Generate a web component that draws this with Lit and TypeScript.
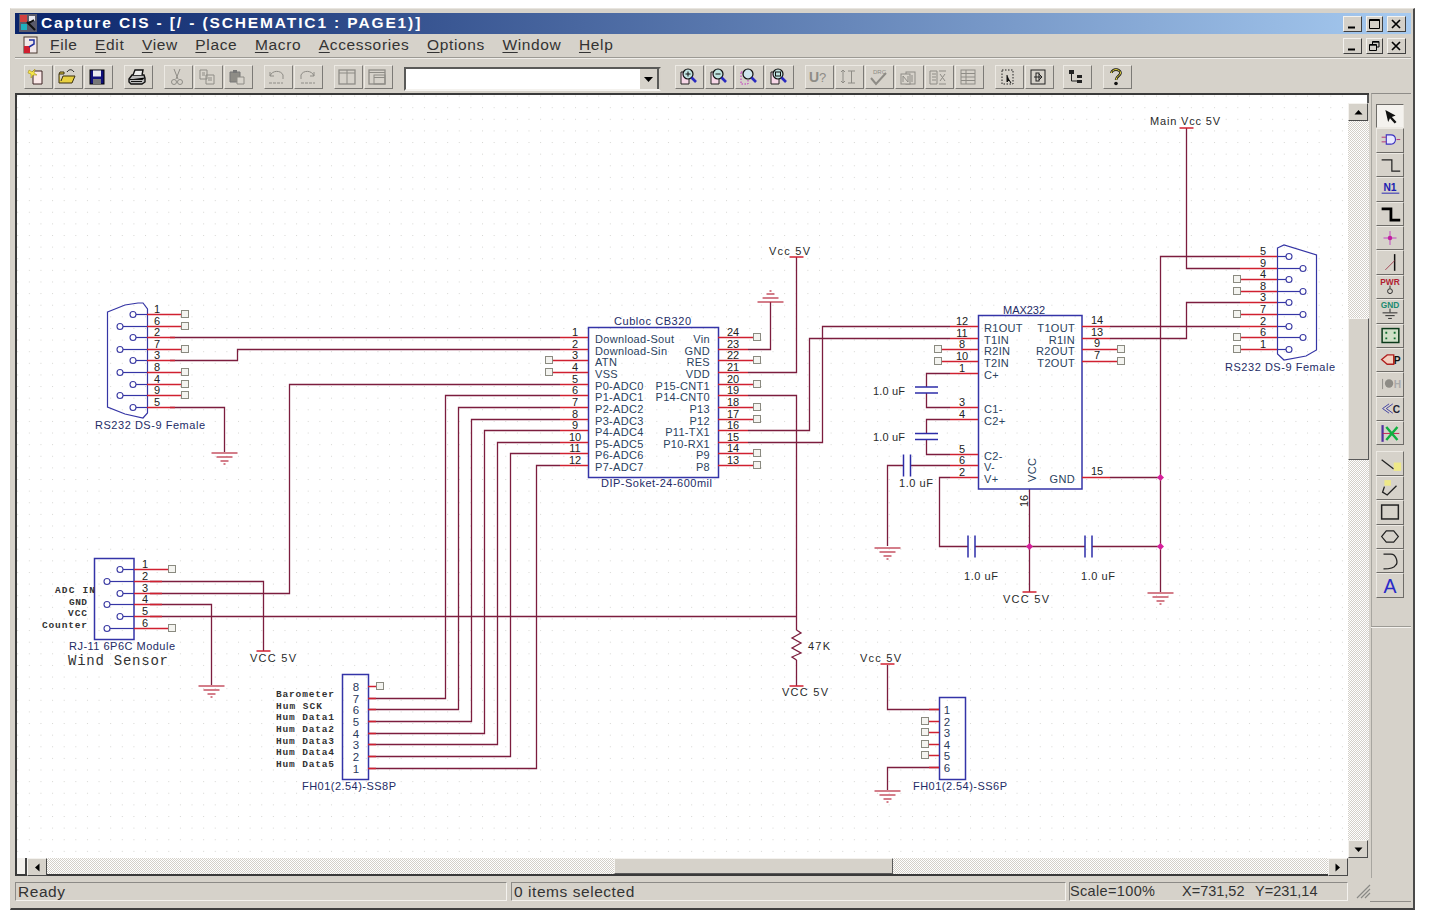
import { LitElement, html, css, svg } from "lit";
import { customElement } from "lit/decorators.js";

type P = [number, number];
const WIRES: P[][] = [
  [[170,337.5],[560,337.5]],
  [[170,360.5],[237.5,360.5],[237.5,349.5],[560,349.5]],
  [[170,407.5],[224.5,407.5],[224.5,452]],
  [[560,384.5],[289.5,384.5],[289.5,593.5],[150,593.5]],
  [[560,395.5],[445.5,395.5],[445.5,698.5],[368,698.5]],
  [[560,407.5],[458.5,407.5],[458.5,709.5],[368,709.5]],
  [[560,419.5],[471.5,419.5],[471.5,721.5],[368,721.5]],
  [[560,430.5],[484.5,430.5],[484.5,733.5],[368,733.5]],
  [[560,442.5],[497.5,442.5],[497.5,744.5],[368,744.5]],
  [[560,453.5],[510.5,453.5],[510.5,756.5],[368,756.5]],
  [[560,465.5],[536.5,465.5],[536.5,768.5],[368,768.5]],
  [[150,581.5],[263.5,581.5],[263.5,651]],
  [[150,604.5],[211.5,604.5],[211.5,685]],
  [[150,616.5],[796.5,616.5]],
  [[748,349.5],[770.5,349.5],[770.5,302]],
  [[748,372.5],[796.5,372.5],[796.5,257]],
  [[748,395.5],[796.5,395.5],[796.5,630]],
  [[796.5,660],[796.5,686]],
  [[748,430.5],[809.5,430.5],[809.5,338.5],[950,338.5]],
  [[748,442.5],[822.5,442.5],[822.5,326.5],[950,326.5]],
  [[1110,326.5],[1240,326.5]],
  [[1110,338.5],[1186.5,338.5],[1186.5,302.5],[1240,302.5]],
  [[1186.5,128],[1186.5,268.5],[1240,268.5]],
  [[1240,256.5],[1160.5,256.5],[1160.5,592]],
  [[1110,477.5],[1160.5,477.5]],
  [[950,373.5],[926.5,373.5],[926.5,387]],
  [[926.5,393],[926.5,407.5],[950,407.5]],
  [[950,419.5],[926.5,419.5],[926.5,433]],
  [[926.5,440],[926.5,454.5],[950,454.5]],
  [[950,465.5],[910,465.5]],
  [[904,465.5],[887.5,465.5],[887.5,546]],
  [[950,477.5],[939.5,477.5],[939.5,546.5],[968,546.5]],
  [[975,546.5],[1085,546.5]],
  [[1092,546.5],[1160.5,546.5]],
  [[1029.5,489],[1029.5,592]],
  [[887.5,665],[887.5,709.5],[939,709.5]],
  [[939,767.5],[887.5,767.5],[887.5,790]],
];

const pinL: [string, number][] = [["1",337.5],["2",349.5],["3",360.5],["4",372.5],["5",384.5],["6",395.5],["7",407.5],["8",419.5],["9",430.5],["10",442.5],["11",453.5],["12",465.5]];
const pinR: [string, number][] = [["24",337.5],["23",349.5],["22",360.5],["21",372.5],["20",384.5],["19",395.5],["18",407.5],["17",419.5],["16",430.5],["15",442.5],["14",453.5],["13",465.5]];
const cublocLeft = ["Download-Sout","Download-Sin","ATN","VSS","P0-ADC0","P1-ADC1","P2-ADC2","P3-ADC3","P4-ADC4","P5-ADC5","P6-ADC6","P7-ADC7"];
const cublocRight = ["Vin","GND","RES","VDD","P15-CNT1","P14-CNT0","P13","P12","P11-TX1","P10-RX1","P9","P8"];
const cublocNc = ["24","22","20","18","17","14","13"];

const maxL: [string, number, string][] = [["12",326.5,"R1OUT"],["11",338.5,"T1IN"],["8",349.5,"R2IN"],["10",361.5,"T2IN"],["1",373.5,"C+"],["3",407.5,"C1-"],["4",419.5,"C2+"],["5",454.5,"C2-"],["6",465.5,"V-"],["2",477.5,"V+"]];
const maxR: [string, number, string][] = [["14",326.5,"T1OUT"],["13",338.5,"R1IN"],["9",349.5,"R2OUT"],["7",361.5,"T2OUT"],["15",477.5,"GND"]];

const squares: P[] = [
  [757,337],[757,360],[757,384],[757,407],[757,419],[757,453],[757,465],
  [549,360],[549,372],
  [938,349],[938,361],[1121,349],[1121,361],
  [185,314],[185,326],[185,349],[185,372],[185,384],[185,395],
  [172,569],[172,628],
  [380,686],
  [1237,279],[1237,291],[1237,314],[1237,337],[1237,349],
  [925,721],[925,732],[925,744],[925,755],
];

const grounds: P[] = [[224.5,453],[211.5,686],[887.5,548],[1160.5,593],[887.5,791]];
const bars: P[] = [[1186.5,128],[796.5,257],[263.5,651],[796.5,686],[887.5,664],[1029.5,592]];
const caps: [number, number, boolean][] = [[926.5,390,true],[926.5,436.5,true],[907,465.5,false],[971.5,546.5,false],[1088.5,546.5,false]];
const dots: P[] = [[1160.5,477.5],[1029.5,546.5],[1160.5,546.5]];

// [x, centre-y, text, width, class]
const LABELS: [number, number, string, number, string][] = [
  [1150,120.5,"Main Vcc 5V",70,"lb"],
  [769,251,"Vcc 5V",41,"lb"],
  [614,321,"Cubloc CB320",77,"rf"],
  [601,483,"DIP-Soket-24-600mil",111,"rf"],
  [1003,309.5,"MAX232",42,"rf"],
  [95,425,"RS232 DS-9 Female",110,"rf"],
  [1225,367,"RS232 DS-9 Female",110,"rf"],
  [69,646,"RJ-11 6P6C Module",106,"rf"],
  [302,785.5,"FH01(2.54)-SS8P",94,"rf"],
  [913,785.5,"FH01(2.54)-SS6P",94,"rf"],
  [873,390.5,"1.0 uF",32,"lb"],
  [873,436.5,"1.0 uF",32,"lb"],
  [899,483,"1.0 uF",34,"lb"],
  [964,576,"1.0 uF",34,"lb"],
  [1081,576,"1.0 uF",34,"lb"],
  [1003,598.5,"VCC 5V",46,"lb"],
  [250,657.5,"VCC 5V",46,"lb"],
  [782,692,"VCC 5V",46,"lb"],
  [860,657.5,"Vcc 5V",41,"lb"],
  [808,646,"47K",22,"lb"],
  [55,588.5,"ADC IN",40,"mono"],
  [69,600.5,"GND",18,"mono"],
  [68,612,"VCC",19,"mono"],
  [42,623.5,"Counter",45,"mono"],
  [276,693,"Barometer",58,"mono"],
  [276,705,"Hum SCK",46,"mono"],
  [276,716,"Hum Data1",58,"mono"],
  [276,728,"Hum Data2",58,"mono"],
  [276,740,"Hum Data3",58,"mono"],
  [276,751,"Hum Data4",58,"mono"],
  [276,763,"Hum Data5",58,"mono"],
  [68,660.5,"Wind Sensor",100,"big"],
];

const label = (x: number, cy: number, s: string, w: number, c: string) =>
  svg`<text x=${x} y=${cy + 4} class=${c} textLength=${w} lengthAdjust="spacing">${s}</text>`;
const num = (x: number, y: number, s: string) => svg`<text x=${x} y=${y} class="num" text-anchor="middle">${s}</text>`;
const pinLine = (x1: number, x2: number, y: number) => svg`<line class="pin" x1=${x1} x2=${x2} y1=${y} y2=${y}></line>`;

function connector(rows: [string, number, number][], numX: number, boxX: number, odd: number, even: number) {
  return rows.map(([n, y, end], i) => {
    const cx = i % 2 === 0 ? odd : even;
    return svg`
      <line class="sym" x1=${cx} x2=${boxX} y1=${y} y2=${y}></line>
      <line class="pin" x1=${boxX} x2=${end} y1=${y} y2=${y}></line>
      <circle class="hole" cx=${cx} cy=${y} r="3"></circle>
      ${num(numX, y - 2, n)}`;
  });
}

const schematic = () => svg`
  <defs>
    <pattern id="grid" x="5.6" y="2.6" width="11.62" height="11.62" patternUnits="userSpaceOnUse">
      <rect width="1" height="1" fill="#d6d6d2"></rect>
    </pattern>
  </defs>
  <rect x="17" y="95" width="1331" height="763" fill="#fff"></rect>
  <rect x="17" y="95" width="1331" height="763" fill="url(#grid)"></rect>

  ${WIRES.map(p => svg`<polyline class="wire" points=${p.map(a => a.join(",")).join(" ")}></polyline>`)}

  <!-- Cubloc -->
  <rect class="box" x="588.5" y="327.5" width="130" height="150"></rect>
  ${pinL.map(([n, y], i) => svg`${pinLine(588, i === 2 || i === 3 ? 553 : 560, y)}${num(575, y - 2, n)}
    <text class="pn" x="595" y=${y + 5.5}>${cublocLeft[i]}</text>`)}
  ${pinR.map(([n, y], i) => svg`${pinLine(718, cublocNc.includes(n) ? 753 : 748, y)}${num(733, y - 2, n)}
    <text class="pn" x="710" y=${y + 5.5} text-anchor="end">${cublocRight[i]}</text>`)}

  <!-- MAX232 -->
  <rect class="box" x="978.5" y="315.5" width="103.5" height="173.5"></rect>
  ${maxL.map(([n, y, s]) => svg`${pinLine(978, n === "8" || n === "10" ? 942 : 950, y)}${num(962, y - 2, n)}
    <text class="pn" x="984" y=${y + 5}>${s}</text>`)}
  ${maxR.map(([n, y, s]) => svg`${pinLine(1082, n === "9" || n === "7" ? 1117 : 1110, y)}${num(1097, y - 3, n)}
    <text class="pn" x="1075" y=${y + 5} text-anchor="end">${s}</text>`)}
  <text class="pn" transform="translate(1036,482) rotate(-90)">VCC</text>
  <text class="num" transform="translate(1028,507) rotate(-90)">16</text>

  <!-- caps -->
  ${caps.map(([x, y, h]) => h
    ? svg`<line class="sym2" x1=${x - 11.5} x2=${x + 11.5} y1=${y - 3} y2=${y - 3}></line><line class="sym2" x1=${x - 11.5} x2=${x + 11.5} y1=${y + 3} y2=${y + 3}></line>`
    : svg`<line class="sym2" x1=${x - 3.5} x2=${x - 3.5} y1=${y - 11} y2=${y + 11}></line><line class="sym2" x1=${x + 3.5} x2=${x + 3.5} y1=${y - 11} y2=${y + 11}></line>`)}

  <!-- resistor -->
  <polyline class="wire" points="796.5,630 801,633 792,638 801,643 792,648 801,653 792,657 796.5,660"></polyline>

  <!-- left DB9 -->
  <path class="sym" d="M107.5,312 L125,305 L138,303 L143,303 L147.5,309 V413 L143,418 L125,414 L107.5,407 Z"></path>
  ${connector([["1",314.5,181],["6",326.5,181],["2",337.5,175],["7",349.5,181],["3",360.5,175],["8",372.5,181],["4",384.5,181],["9",395.5,181],["5",407.5,175]], 157, 147, 133, 120)}

  <!-- right DB9 -->
  <path class="sym" d="M1277.5,248 L1284,245 L1316.5,255 V350 L1306,356 L1284,360 L1277.5,354 Z"></path>
  ${connector([["5",256.5,1240],["9",268.5,1240],["4",279.5,1241],["8",291.5,1241],["3",302.5,1240],["7",314.5,1241],["2",326.5,1240],["6",337.5,1241],["1",349.5,1241]], 1263, 1277, 1289, 1303)}

  <!-- RJ-11 -->
  <rect class="box" x="94.5" y="558.5" width="39.5" height="81"></rect>
  ${connector([["1",569.5,168],["2",581.5,162],["3",593.5,162],["4",604.5,162],["5",616.5,162],["6",628.5,168]], 145, 134, 120, 107)}

  <!-- headers -->
  <rect class="box" x="342.5" y="674.5" width="26" height="105"></rect>
  ${[["8",686.5],["7",698.5],["6",709.5],["5",721.5],["4",733.5],["3",744.5],["2",756.5],["1",768.5]].map(([n, y]) =>
    svg`${pinLine(368, 376, +y)}<text class="hn" x="356" y=${+y + 4} text-anchor="middle">${n}</text>`)}
  <rect class="box" x="939.5" y="697.5" width="26" height="82"></rect>
  ${[["1",709.5],["2",721.5],["3",732.5],["4",744.5],["5",755.5],["6",767.5]].map(([n, y]) =>
    svg`${pinLine(939, 929, +y)}<text class="hn" x="947" y=${+y + 4} text-anchor="middle">${n}</text>`)}

  <!-- power -->
  ${grounds.map(([x, y]) => svg`<g class="gnd"><line x1=${x - 13} x2=${x + 13} y1=${y} y2=${y}></line><line x1=${x - 8} x2=${x + 8} y1=${y + 4} y2=${y + 4}></line><line x1=${x - 4} x2=${x + 4} y1=${y + 8} y2=${y + 8}></line><line x1=${x - 1} x2=${x + 1} y1=${y + 11} y2=${y + 11}></line></g>`)}
  <g class="gnd"><line x1="757.5" x2="783.5" y1="302" y2="302"></line><line x1="762.5" x2="778.5" y1="298" y2="298"></line><line x1="766.5" x2="774.5" y1="294" y2="294"></line><line x1="769.5" x2="771.5" y1="291" y2="291"></line></g>
  ${bars.map(([x, y]) => svg`<line class="pin" x1=${x - 7} x2=${x + 7} y1=${y} y2=${y}></line>`)}
  ${dots.map(([x, y]) => svg`<rect x=${x - 2.5} y=${y - 2.5} width="5" height="5" fill="#d6209c" transform="rotate(45 ${x} ${y})"></rect>`)}

  ${squares.map(([x, y]) => svg`<rect class="nc" x=${x - 3.5} y=${y - 3.5} width="7" height="7"></rect>`)}
  ${LABELS.map(l => label(...l))}
`;

const i16 = (c: unknown) => svg`<svg class="ic" viewBox="0 0 20 20" width="20" height="20">${c}</svg>`;
const G = "#8e8c86";
const TOOLS = {
  nw: svg`<path d="M6 4H15V17H6Z" fill="#fbe9e9" stroke="#3a2020"></path><path d="M2 3 L5 5 L8 2 L7 6 L10 8 L6 8 L4 11 L4 7 L1 6Z" fill="#f6e64a" stroke="#a89020" stroke-width=".6"></path>`,
  op: svg`<path d="M2 7 L2 16 H15 L18 9 H6 L4 14" fill="#e8d040" stroke="#3a3010"></path><path d="M2 7 H7 V5 H3Z" fill="#e8d040" stroke="#3a3010"></path><path d="M10 5 C12 2 15 2 17 5" stroke="#222" fill="none"></path>`,
  sv: svg`<rect x="3" y="3" width="14" height="14" fill="#10107a" stroke="#000"></rect><rect x="6" y="3.5" width="8" height="6" fill="#e8e8f0"></rect><rect x="6" y="12" width="8" height="5" fill="#777"></rect>`,
  pr: svg`<path d="M2 12 L5 8 H17 L18 11 V15 L15 17 H4 L2 15Z" fill="#bbb" stroke="#111" stroke-width="1.4"></path><path d="M6 8 L8 3 H16 L15 8" fill="#eee" stroke="#111" stroke-width="1.4"></path><path d="M2.5 12.5 H15.5 L18 10.5 M4 14.5H15" stroke="#111"></path>`,
  ct: svg`<path d="M7 2 L11 12 M13 2 L9 12" stroke=${G} fill="none"></path><circle cx="7" cy="15" r="2.5" fill="none" stroke=${G}></circle><circle cx="13" cy="15" r="2.5" fill="none" stroke=${G}></circle>`,
  cp: svg`<path d="M3 3H10V12H3Z M9 8H17V17H9Z" fill="#d8d4cc" stroke=${G}></path><path d="M5 6H8M5 8H8M11 11H15M11 13H15" stroke=${G}></path>`,
  pa: svg`<path d="M3 5H13V15H3Z" fill=${G} stroke="#777"></path><path d="M6 3H10V6H6Z" fill="#777"></path><path d="M10 10H17V17H10Z" fill="#d8d4cc" stroke=${G}></path>`,
  un: svg`<path d="M3 9 C5 3 14 3 16 8 L16 12 M3 5 V9 H7" fill="none" stroke=${G}></path><path d="M2 16H16" stroke=${G} stroke-dasharray="3 1"></path>`,
  re: svg`<path d="M17 9 C15 3 6 3 4 8 L4 12 M17 5 V9 H13" fill="none" stroke=${G}></path><path d="M4 16H18" stroke=${G} stroke-dasharray="3 1"></path>`,
  w1: svg`<rect x="2" y="3" width="16" height="14" fill="none" stroke=${G} stroke-width="1.3"></rect><path d="M2 6H18M10 3V17" stroke=${G}></path>`,
  w2: svg`<rect x="2" y="3" width="16" height="14" fill="none" stroke=${G} stroke-width="1.3"></rect><rect x="7" y="8" width="11" height="9" fill="none" stroke=${G}></rect><path d="M2 5.5H18M7 10.5H18" stroke=${G}></path>`,
  z1: svg`<path d="M3 5H11V17H3Z" fill="#f8d8e8" stroke="#222"></path><circle cx="10" cy="7" r="5" fill="#bfe3e0" stroke="#111" stroke-width="1.2"></circle><path d="M7.5 7H12.5M10 4.5V9.5" stroke="#111"></path><path d="M13.5 10.5 L18 15" stroke="#2a2ac0" stroke-width="2.6"></path>`,
  z2: svg`<path d="M3 5H11V17H3Z" fill="#f8d8e8" stroke="#222"></path><circle cx="10" cy="7" r="5" fill="#bfe3e0" stroke="#111" stroke-width="1.2"></circle><path d="M7.5 7H12.5" stroke="#111"></path><path d="M13.5 10.5 L18 15" stroke="#2a2ac0" stroke-width="2.6"></path>`,
  z3: svg`<path d="M3 5H10V17H3Z" fill="none" stroke="#c030c0" stroke-dasharray="1.5 1.5"></path><circle cx="10" cy="7" r="5" fill="#cfe6ee" stroke="#111" stroke-width="1.2"></circle><path d="M13.5 10.5 L18 15" stroke="#2a2ac0" stroke-width="2.6"></path>`,
  z4: svg`<path d="M3 5H11V17H3Z" fill="#f8d8e8" stroke="#222"></path><circle cx="10" cy="7" r="5" fill="#bfe3e0" stroke="#111" stroke-width="1.2"></circle><rect x="7.5" y="5" width="5" height="4" fill="none" stroke="#111"></rect><path d="M13.5 10.5 L18 15" stroke="#2a2ac0" stroke-width="2.6"></path>`,
  u: svg`<text x="1" y="15" font-size="14" font-weight="700" font-family="Liberation Sans" fill=${G}>U</text><text x="11" y="15" font-size="13" font-family="Liberation Sans" fill=${G}>?</text>`,
  ud: svg`<path d="M5 3V16M3 5L5 3L7 5M3 14L5 16L7 14M10 4H17M13.5 4V16M10 16H17" fill="none" stroke=${G}></path>`,
  dr: svg`<text x="5" y="7" font-size="6" font-family="Liberation Sans" fill=${G}>DRC</text><path d="M3 11 L8 17 L18 6" fill="none" stroke=${G} stroke-width="2"></path>`,
  nl: svg`<rect x="8" y="5" width="9" height="12" fill="none" stroke=${G}></rect><rect x="3" y="7" width="9" height="10" fill="#d8d4cc" stroke=${G}></rect><path d="M5 15V9L10 15V9M14 8V15" fill="none" stroke=${G}></path>`,
  xb: svg`<path d="M2 4H9V17H2ZM4 7H8M4 10H8M4 13H8" fill="none" stroke=${G}></path><path d="M11 4H18M11 17H18M12 7L17 14M17 7L12 14" fill="none" stroke=${G}></path>`,
  ls: svg`<rect x="3" y="3" width="14" height="14" fill="none" stroke=${G}></rect><path d="M3 6.5H17M3 10H17M3 13.5H17M8 3V17" stroke=${G}></path>`,
  s1: svg`<rect x="4" y="3" width="11" height="14" fill="none" stroke="#222" stroke-dasharray="1.5 1.5"></rect><path d="M9 8L9 15L11 13L13 16" fill="#111" stroke="#111"></path>`,
  s2: svg`<rect x="3" y="3" width="14" height="14" fill="none" stroke="#222"></rect><path d="M6 10H14M11 7L14 10L11 13" fill="none" stroke="#222"></path><rect x="8" y="6" width="3" height="8" fill="none" stroke="#222"></rect>`,
  s3: svg`<rect x="3" y="3" width="5" height="4" fill="#222"></rect><path d="M5.5 7V14H11" fill="none" stroke="#222"></path><rect x="11" y="8" width="5" height="3" fill="#222"></rect><rect x="11" y="13" width="5" height="3" fill="#222"></rect>`,
  hp: svg`<path d="M5.5 6 C5.5 1.5 14.5 1.5 14.5 6 C14.5 9 10 9 10 13" fill="none" stroke="#111" stroke-width="2.6"></path><path d="M5.5 6 C5.5 1.5 14.5 1.5 14.5 6 C14.5 9 10 9 10 13" fill="none" stroke="#f0e040" stroke-width="1"></path><circle cx="10" cy="16.5" r="1.8" fill="#111"></circle>`,
};
const GROUPS: (keyof typeof TOOLS)[][] = [["nw","op","sv"],["pr"],["ct","cp","pa"],["un","re"],["w1","w2"]];
const GROUPS2: (keyof typeof TOOLS)[][] = [["z1","z2","z3","z4"],["u","ud","dr","nl","xb","ls"],["s1","s2"]];

const ptext = (x: number, y: number, s: string, fill: string, size = 8, w = 700) =>
  svg`<text x=${x} y=${y} font-size=${size} font-weight=${w} font-family="Liberation Sans" text-anchor="middle" fill=${fill}>${s}</text>`;
const PAL1 = [
  svg`<path d="M8 5 L19 11 L15 12.5 L20 18 L18 19.5 L13 14 L11 18Z" transform="translate(1 0)" fill="#111"></path>`,
  svg`<path d="M10 6H15 C21 6 22 15 15 16H10Z" fill="#e8e8ff" stroke="#3a30c0" stroke-width="1.2"></path><path d="M5 8.5H10M5 13.5H10M21 11H25" stroke="#b0307a"></path>`,
  svg`<path d="M5 6H16V18H25" fill="none" stroke="#222" stroke-width="1.3"></path>`,
  svg`<text x="14" y="13.5" font-size="11" font-weight="700" font-family="Liberation Sans" text-anchor="middle" fill="#2020b0">N1</text><path d="M5 16H24" stroke="#2020b0"></path>`,
  svg`<path d="M5 6H15V18H25" fill="none" stroke="#000" stroke-width="3"></path>`,
  svg`<path d="M7 11.5H21M14 4V19" stroke="#c040c0"></path><circle cx="14" cy="11.5" r="2.4" fill="#c020a0"></circle>`,
  svg`<path d="M19 3V21" stroke="#111" stroke-width="1.6"></path><path d="M9 20L19 10" stroke="#a04050"></path>`,
  svg`${ptext(14, 9, "PWR", "#b02030", 9)}<path d="M14 10V13" stroke="#222"></path><circle cx="14" cy="16" r="2.6" fill="none" stroke="#222"></circle>`,
  svg`${ptext(14, 8.5, "GND", "#208a70", 9)}<path d="M14 9V13M6 13.5H22M9 16.5H19M12 19.5H16" stroke="#222"></path>`,
  svg`<rect x="5.5" y="3.5" width="18" height="15" fill="#d0e0c8" stroke="#0a3a1a" stroke-width="1.6"></rect><path d="M9 7h2v2h-2zM18 7h2v2h-2zM9 13h2v2h-2zM18 13h2v2h-2z" fill="#107030"></path>`,
  svg`<path d="M5 11 L11 6 H18 V16 H11Z" fill="#f4d0c0" stroke="#b02020" stroke-width="1.5"></path><text x="18" y="16" font-size="11" font-weight="700" font-family="Liberation Sans" fill="#111">P</text>`,
  svg`<path d="M6 6V17" stroke=${G}></path><circle cx="13" cy="11" r="4.5" fill=${G}></circle><text x="18" y="16" font-size="11" font-weight="700" font-family="Liberation Sans" fill="#aaa">H</text>`,
  svg`<path d="M13 6L6 11L13 16M17 6L10 11L17 16" fill="none" stroke="#3a3aa0"></path><text x="17" y="16" font-size="11" font-weight="700" font-family="Liberation Sans" fill="#223">C</text>`,
  svg`<path d="M6 3V21" stroke="#5030a0" stroke-width="2.4"></path><path d="M6 12H24" stroke="#c02050"></path><path d="M10 5L22 19M22 5L10 19" stroke="#10b040" stroke-width="2.6"></path>`,
];
const PAL2 = [
  svg`<path d="M5 8L18 18" stroke="#222" stroke-width="1.4"></path><rect x="18" y="11" width="8" height="9" fill="#eee888"></rect>`,
  svg`<path d="M8 10L6 16L11 19L21 9" fill="none" stroke="#222" stroke-width="1.4"></path><rect x="8" y="3" width="7" height="6" fill="#eee888"></rect>`,
  svg`<rect x="5" y="4" width="18" height="15" fill="none" stroke="#222" stroke-width="1.6"></rect>`,
  svg`<path d="M10 5H18L23 11L18 17H10L5 11Z" fill="none" stroke="#222" stroke-width="1.3"></path>`,
  svg`<path d="M7 4H15 C21 4 23 14 20 16 C18 20 12 20 7 20" fill="none" stroke="#222" stroke-width="1.4"></path>`,
  svg`<text x="14" y="20" font-size="21" font-family="Liberation Serif" text-anchor="middle" fill="#2a2ac8">A</text>`,
];

@customElement("app-root")
export class AppRoot extends LitElement {
  static styles = css`
    :host { display: block; width: 1431px; height: 924px; background: #fff; overflow: hidden;
      font-family: "Liberation Sans", Arial, sans-serif; color: #222; }
    * { box-sizing: border-box; }
    .outer { padding: 8px 0 0 10px; }
    .win { width: 1405px; height: 902px; background: #d6d2ca; border-top: 1px solid #e8e5df; border-left: 1px solid #d4d0c8;
      border-right: 2px solid #4a4a4a; border-bottom: 2px solid #404040; padding: 4px 2px 0 4px; display: flex; flex-direction: column; }

    .title { height: 21px; flex: none; display: flex; align-items: center; padding: 0 5px 1px 4px;
      background: linear-gradient(90deg, #0a246a, #a6caf0); color: #fff; font-weight: 700; font-size: 15.5px; letter-spacing: 1.88px; }
    .title .app { width: 18px; height: 18px; margin-right: 4px; flex: none; }
    .winbtns { margin-left: auto; display: flex; gap: 4px; margin-top: 1px; }
    .wb { width: 19px; height: 16px; background: #d4d0c8; border: 1px solid; border-color: #f4f2ee #404040 #404040 #f4f2ee; display: flex; align-items: center; justify-content: center; }
    .wb.mid { width: 17px; }
    .wb svg { display: block; }

    .menu { height: 24px; flex: none; display: flex; align-items: center; padding: 0 5px 1px 8px; border-bottom: 1px solid #9c9a94; font-size: 15.5px; letter-spacing: .65px; color: #333; }
    .menu .mi { margin-right: 17.5px; }
    .menu .doc { width: 16px; height: 18px; margin-right: 11px; flex: none; }
    .menu u { text-underline-offset: 2px; }

    .tools { height: 35px; flex: none; display: flex; align-items: flex-start; gap: 11px; padding: 6px 0 0 9px; border-top: 1px solid #f0eeea; }
    .tg { display: flex; gap: 1px; }
    .tb { width: 29px; height: 24px; display: flex; align-items: center; justify-content: center; padding-right: 3px; border: 1px solid; border-color: #ece9e3 #7c7a76 #7c7a76 #ece9e3; background: #d6d2ca; }
    .ic { display: block; }
    .combo { width: 257px; height: 24px; margin: 2px 3px 0 0; background: #fff; border: 2px solid; border-color: #5a5a58 #d4d0c8 #f4f2ee #5a5a58; position: relative; display: flex; justify-content: flex-end; }
    .combo .drop { width: 19px; background: #d6d2ca; border-right: 2px solid #5a5a58; display: flex; align-items: center; justify-content: center; }
    .arr { display: block; }
    .tight { margin-left: -2px; }

    .main { flex: none; display: flex; height: 785px; }
    .doc-frame { width: 1355px; flex: none; display: grid; grid-template-columns: 1333px 22px; grid-template-rows: 765px 18px 2px; }
    .view { border-top: 2px solid #3a3a3a; border-left: 2px solid #3a3a3a; overflow: hidden; }
    .view svg { display: block; }
    .vbar { border-top: 2px solid #3a3a3a; display: flex; flex-direction: column; width: 21px; }
    .hbar { display: flex; border-left: 2px solid #3a3a3a; border-bottom: 2px solid #3a3a3a; }
    .track { background: repeating-conic-gradient(#d4d0c8 0 25%, #fff 0 50%) 0 0 / 2px 2px; }
    .tab { flex: none; height: 8px; background: #fff; border-right: 2px solid #555; }
    .sb { flex: none; width: 20px; height: 18px; display: flex; align-items: center; justify-content: center; background: #d6d2ca; border: 1px solid; border-color: #f4f2ee #4a4a4a #4a4a4a #f4f2ee; }
    .thumb { background: #d6d2ca; border: 1px solid; border-color: #f4f2ee #5a5a5a #5a5a5a #f4f2ee; }
    .hstub { width: 10px; flex: none; border-right: 2px solid #444; background: #f4f2ee; }

    .pal { width: 40px; flex: none; margin-left: 1px; border-left: 1px solid #a8a6a0; border-top: 1px solid #8e8c88; padding: 10px 0 0 4px; display: flex; flex-direction: column; align-items: flex-start; position: relative; }
    .pb { width: 28px; height: 24.4px; flex: none; background: #d6d2ca; border: 1px solid; border-color: #ece9e3 #6e6c68 #6e6c68 #ece9e3; display: block; }
    .pb.on { background: #f4f2ee; border-color: #6e6c68 #ece9e3 #ece9e3 #6e6c68; }
    .pb svg { display: block; }
    .gap6 { height: 6px; flex: none; }
    .pal .sep { margin: 28px 0 0 -5px; height: 2px; width: 40px; flex: none; border-top: 1px solid #9c9a94; border-bottom: 1px solid #f4f2ee; }

    .status { height: 20px; flex: none; margin-top: 4px; display: flex; gap: 3px; font-size: 15.5px; color: #333; position: relative; }
    .pane { height: 19px; border: 1px solid; border-color: #8c8a86 #f4f2ee #f4f2ee #8c8a86; padding: 0 0 0 2px; line-height: 17px; white-space: nowrap; display: flex; letter-spacing: .55px; }
    .p1 { width: 492px; } .p2 { width: 555px; margin-left: 1px; } .p3 { width: 279px; padding-left: 0; font-size: 14.5px; letter-spacing: 0; }
    .coord1 { width: 112px; letter-spacing: .35px; } .coord2 { width: 73px; } 
    .grip { flex: 1; position: relative; }
    .grip svg { position: absolute; right: 40px; top: 1px; }
    .bline { position: absolute; right: 0; top: 19px; width: 41px; border-top: 1px solid #8e8c88; }

    text { font-family: "Liberation Sans", Arial, sans-serif; }
    .wire { fill: none; stroke: #7c1d3e; stroke-width: 1.3; }
    .pin { stroke: #d02030; stroke-width: 1.5; }
    .sym { fill: none; stroke: #3535a5; stroke-width: 1.2; }
    .sym2 { stroke: #2c2ca8; stroke-width: 1.5; }
    .box { fill: none; stroke: #3434a8; stroke-width: 1.5; }
    .hole { fill: #fff; stroke: #3c3ca4; stroke-width: 1.1; }
    .nc { fill: #f4f4f0; stroke: #8a8a80; }
    .gnd line { stroke: #b8283c; stroke-width: 1.2; }
    .num { font-size: 11px; fill: #222; }
    .hn { font-size: 11.5px; fill: #2a3a5c; }
    .pn { font-size: 11px; fill: #2a4260; letter-spacing: .32px; }
    .lb { font-size: 11px; fill: #2a2a2a; }
    .rf { font-size: 11px; fill: #1e2c66; }
    .mono { font-family: "Liberation Mono", monospace; font-size: 9.5px; font-weight: 700; fill: #333; }
    .big { font-family: "Liberation Mono", monospace; font-size: 14px; fill: #333; }
  `;

  private tb(k: keyof typeof TOOLS) { return html`<div class="tb">${i16(TOOLS[k])}</div>`; }
  private group(g: (keyof typeof TOOLS)[], cls = "") { return html`<div class="tg ${cls}">${g.map(k => this.tb(k))}</div>`; }
  private arrow(points: string, w = 9, h = 9) {
    return html`<svg class="arr" width=${w} height=${h} viewBox="0 0 9 9"><polygon points=${points} fill="#000"></polygon></svg>`;
  }
  private winBtns(restore: boolean) {
    return html`<div class="winbtns">
      <div class="wb"><svg width="11" height="10" viewBox="0 0 11 10"><path d="M1 8.5H8" stroke="#000" stroke-width="2"></path></svg></div>
      <div class="wb mid"><svg width="11" height="10" viewBox="0 0 11 10">${restore
        ? svg`<path d="M3.5 3V.5H10V6H7.5M.5 3.5H7.5V9.5H.5Z M.5 4.2H7.5 M3.5 1.2H10" fill="none" stroke="#000"></path>`
        : svg`<path d="M.5 .5H10.5V9.5H.5Z M.5 1.5H10.5" fill="none" stroke="#000"></path>`}</svg></div>
      <div class="wb"><svg width="11" height="10" viewBox="0 0 11 10"><path d="M1 1L9 9M9 1L1 9" stroke="#000" stroke-width="1.7"></path></svg></div>
    </div>`;
  }

  render() {
    return html`<div class="outer"><div class="win">
      <div class="title">
        <svg class="app" viewBox="0 0 18 18"><rect width="18" height="18" fill="#5a5a6a"></rect><rect x="1" y="1" width="7" height="7" fill="#d04040"></rect><rect x="10" y="2" width="6" height="5" fill="#e8e8f0"></rect><rect x="2" y="10" width="6" height="6" fill="#20b0c0"></rect><path d="M8 8 L16 16 M10 9 L15 6" stroke="#111" stroke-width="2"></path></svg>
        <span>Capture CIS - [/ - (SCHEMATIC1 : PAGE1)]</span>
        ${this.winBtns(false)}
      </div>
      <div class="menu">
        <svg class="doc" viewBox="0 0 16 18"><rect x="1" y="1" width="13" height="16" fill="#f2e8e8" stroke="#4a3a30"></rect><rect x="1" y="10" width="6" height="7" fill="#d02030"></rect><path d="M6 4H11V8L6 11" fill="none" stroke="#2030a0" stroke-width="1.5"></path></svg>
        ${["File","Edit","View","Place","Macro","Accessories","Options","Window","Help"].map(m =>
          html`<span class="mi"><u>${m[0]}</u>${m.slice(1)}</span>`)}
        ${this.winBtns(true)}
      </div>
      <div class="tools">
        ${GROUPS.map(g => this.group(g))}
        <div class="combo"><div class="drop">${this.arrow("0,2 9,2 4.5,7")}</div></div>
        ${this.group(GROUPS2[0])}
        ${this.group(GROUPS2[1])}
        ${this.group(GROUPS2[2])}
        <div class="tg tight">${this.tb("s3")}</div>
        ${this.tb("hp")}
      </div>
      <div class="main">
        <div class="doc-frame">
          <div class="view"><svg width="1331" height="763" viewBox="17 95 1331 763">${schematic()}</svg></div>
          <div class="vbar">
            <div class="tab"></div>
            <div class="sb">${this.arrow("0.5,6.5 8.5,6.5 4.5,2")}</div>
            <div class="track" style="flex:198"></div>
            <div class="thumb" style="flex:140"></div>
            <div class="track" style="flex:381"></div>
            <div class="sb">${this.arrow("0.5,2.5 8.5,2.5 4.5,7")}</div>
          </div>
          <div class="hbar">
            <div class="hstub"></div>
            <div class="sb">${this.arrow("6.5,0.5 6.5,8.5 2,4.5")}</div>
            <div class="track" style="flex:568"></div>
            <div class="thumb" style="flex:277"></div>
            <div class="track" style="flex:436"></div>
            <div class="sb">${this.arrow("2.5,0.5 2.5,8.5 7,4.5")}</div>
          </div>
        </div>
        <div class="pal">
          ${PAL1.map((p, i) => html`<div class="pb ${i === 0 ? "on" : ""}"><svg width="26" height="22" viewBox="0 0 28 23">${p}</svg></div>`)}
          <div class="gap6"></div>
          ${PAL2.map(p => html`<div class="pb"><svg width="26" height="22" viewBox="0 0 28 23">${p}</svg></div>`)}
          <div class="sep"></div>
        </div>
      </div>
      <div class="status">
        <div class="pane p1">Ready</div>
        <div class="pane p2">0 items selected</div>
        <div class="pane p3"><span class="coord1">Scale=100%</span><span class="coord2">X=731,52</span><span class="coord3">Y=231,14</span></div>
        <div class="grip"><svg width="16" height="16" viewBox="0 0 16 16"><path d="M2 15L15 2M6 15L15 6M10 15L15 10" stroke="#8a8a86" stroke-width="1.2"></path></svg></div>
        <div class="bline"></div>
      </div>
    </div></div>`;
  }
}
